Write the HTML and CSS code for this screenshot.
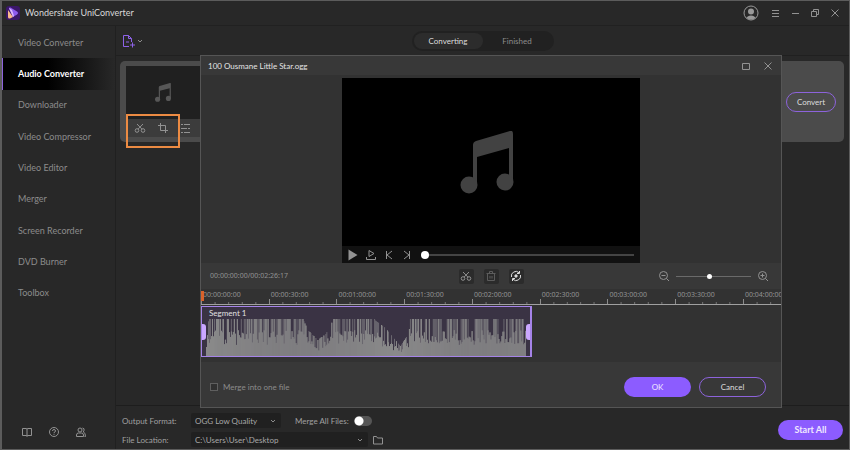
FILE: index.html
```html
<!DOCTYPE html>
<html lang="en">
<head>
  <meta charset="UTF-8">
  <meta name="viewport" content="width=device-width, initial-scale=1.0">
  <title>Wondershare UniConverter</title>
  <link rel="stylesheet" href="styles.css">
</head>
<body>
  <!-- shared icons -->
  <svg class="sprite" aria-hidden="true">
    <symbol id="note" viewBox="0 0 54 63">
      <path d="M13 14q0-3 3-4L50 0q3-1 3 3v47h-4V17L17 26v29h-4z"/>
      <circle cx="9" cy="54" r="8.500"/>
      <circle cx="45" cy="51" r="8.500"/>
    </symbol>
    <symbol id="scissors" viewBox="0 0 12 12">
      <circle cx="3" cy="8.500" r="1.800"/>
      <circle cx="9" cy="8.500" r="1.800"/>
      <path d="M3 2l5 5.200M9 2L4 7.200"/>
    </symbol>
    <symbol id="close" viewBox="0 0 12 12">
      <path d="M2.500 2.500l7 7M9.500 2.500l-7 7"/>
    </symbol>
  </svg>

  <div class="window">
    <header class="titlebar">
      <svg class="logo" viewBox="0 0 14 14">
        <rect width="14" height="14" rx="3" fill="#3b1769"/>
        <path d="M3 2.500q0-1.500 1.500-1l6.500 4q2 1.500 0 3l-4 2.500z" fill="#8f5cf0"/>
        <path d="M2 4l5 7-3 1.500q-2 .5-2-1.500z" fill="#f8b98b"/>
        <path d="M3 2l4 9 1-1-2-6z" fill="#dcb8ff"/>
      </svg>
      <h1>Wondershare UniConverter</h1>
      <div class="window-buttons">
        <button class="account" aria-label="Account">
          <svg class="avatar" viewBox="0 0 16 16">
            <circle cx="8" cy="8" r="7"/>
            <circle class="fill" cx="8" cy="6.500" r="3"/>
            <path class="fill" d="M3.500 13q1-2.500 4.500-2.500t4.500 2.500q-4.500 3-9 0z"/>
          </svg>
        </button>
        <button aria-label="Menu"><svg class="icon" viewBox="0 0 12 12"><path d="M3 3.500h7M3 6.500h7M3 9.500h7"/></svg></button>
        <button aria-label="Minimize"><svg class="icon" viewBox="0 0 12 12"><path d="M3 6.500h7"/></svg></button>
        <button aria-label="Restore"><svg class="icon" viewBox="0 0 12 12"><path d="M2.500 4.500h5v5h-5zM4.500 4.500v-2h5v5h-2"/></svg></button>
        <button aria-label="Close"><svg class="icon"><use href="#close"/></svg></button>
      </div>
    </header>

    <aside class="sidebar">
      <nav>
        <a href="#">Video Converter</a>
        <a href="#" class="active">Audio Converter</a>
        <a href="#">Downloader</a>
        <a href="#">Video Compressor</a>
        <a href="#">Video Editor</a>
        <a href="#">Merger</a>
        <a href="#">Screen Recorder</a>
        <a href="#">DVD Burner</a>
        <a href="#">Toolbox</a>
      </nav>
      <div class="help">
        <button aria-label="Guide"><svg class="icon" viewBox="0 0 12 12"><path d="M6 3v7.500M6 3L5 2.500H1.500v7H5l1 .5 1-.5h3.500v-7H7z"/></svg></button>
        <button aria-label="Help"><svg class="icon" viewBox="0 0 12 12"><circle cx="6" cy="6" r="4.500"/><path d="M4.500 5q0-1.500 1.500-1.500T7.500 5Q7.500 6 6 6.500v.8M6 8.200v.8"/></svg></button>
        <button aria-label="Community"><svg class="icon" viewBox="0 0 12 12"><circle cx="5" cy="4" r="2"/><path d="M1.500 10.500V9q0-2 2-2h3q2 0 2 2v1.500zM7.500 2q2 .3 1.600 2.200L8.300 6Q10.500 6.500 10.500 10.500H9.500"/></svg></button>
      </div>
    </aside>

    <main class="content">
      <div class="toolbar">
        <button class="add" aria-label="Add file">
          <svg class="add-icon" viewBox="0 0 14 14"><path d="M7 12.500H1.500v-11h5l3 3V8M6.500 1.500v3h3M4 8h3M10.500 8.500v5M8 11h5"/></svg>
          <svg class="chevron" viewBox="0 0 6 6"><path d="M1 2l2 2 2-2"/></svg>
        </button>
        <div class="tabs">
          <button class="tab selected">Converting</button>
          <button class="tab">Finished</button>
        </div>
      </div>

      <section class="files">
        <div class="file">
          <div class="preview">
            <div class="thumb"><svg><use href="#note"/></svg></div>
            <div class="actions">
              <button aria-label="Trim"><svg class="icon"><use href="#scissors"/></svg></button>
              <button aria-label="Crop"><svg class="icon" viewBox="0 0 12 12"><path d="M3.500 1v7.500H11M1 3.500h7.500V11"/></svg></button>
              <button aria-label="Effects"><svg class="icon" viewBox="0 0 12 12"><path d="M1 2.500h2M4 2.500h6M1 6.500h6M8 6.500h2M1 10.500h2M4 10.500h6"/></svg></button>
              <span class="highlight"></span>
            </div>
          </div>
          <button class="outline convert">Convert</button>
        </div>
      </section>

      <footer class="output">
        <div class="settings">
          <label for="format">Output Format:</label>
          <div class="setting">
            <span class="select format"><select id="format"><option>OGG Low Quality</option></select><svg class="chevron" viewBox="0 0 6 6"><path d="M1 2l2 2 2-2"/></svg></span>
            <label for="merge-all">Merge All Files:</label>
            <input type="checkbox" class="switch" id="merge-all">
          </div>
          <label for="location">File Location:</label>
          <div class="setting">
            <span class="select location"><select id="location"><option>C:\Users\User\Desktop</option></select><svg class="chevron" viewBox="0 0 6 6"><path d="M1 2l2 2 2-2"/></svg></span>
            <button class="folder" aria-label="Open folder"><svg class="icon" viewBox="0 0 12 12"><path d="M1.500 10V2.500h3l1 1.500h5v6z"/></svg></button>
          </div>
        </div>
        <button class="primary start">Start All</button>
      </footer>
    </main>

    <section class="dialog" role="dialog" aria-labelledby="dialog-title">
      <div class="dialog-title">
        <h2 id="dialog-title">100 Ousmane Little Star.ogg</h2>
        <button aria-label="Maximize"><svg class="icon" viewBox="0 0 12 12"><path d="M2.500 3.500h7v6h-7z"/></svg></button>
        <button aria-label="Close dialog"><svg class="icon"><use href="#close"/></svg></button>
      </div>

      <div class="stage">
        <div class="player">
          <div class="screen"><svg><use href="#note"/></svg></div>
          <div class="controls">
            <button aria-label="Play"><svg class="icon play" viewBox="0 0 12 12"><path d="M1.500 .5l9 5.500-9 5.500z"/></svg></button>
            <button aria-label="Play segment"><svg class="icon" viewBox="0 0 12 12"><path d="M4 1.500l5 3-5 3zM1.500 8v2.500h9V8"/></svg></button>
            <button aria-label="Previous frame"><svg class="icon" viewBox="0 0 12 12"><path d="M3.500 2v8M9 2L4 6l5 4"/></svg></button>
            <button aria-label="Next frame"><svg class="icon" viewBox="0 0 12 12"><path d="M8.500 2v8M3 2l5 4-5 4"/></svg></button>
            <input type="range" class="seek" value="0" aria-label="Position">
          </div>
        </div>
      </div>

      <div class="tools">
        <span class="time">00:00:00:00/00:02:26:17</span>
        <div class="edit">
          <button aria-label="Cut"><svg class="icon"><use href="#scissors"/></svg></button>
          <button class="disabled" aria-label="Delete" disabled><svg class="icon" viewBox="0 0 12 12"><path d="M1.500 3.500h9M4.500 3V1.500h3V3M2.500 3.500v7h7v-7M5 6v2.500M7 6v2.500"/></svg></button>
          <button class="bright" aria-label="Reset"><svg class="icon" viewBox="0 0 12 12"><path d="M1.500 7A4.500 4.500 0 0 1 9 2.700M10.500 5A4.500 4.500 0 0 1 3 9.300M9.500 1v2.500H7M2.500 11V8.500H5"/><circle class="dot" cx="6" cy="6" r="1.200"/></svg></button>
        </div>
        <div class="scale">
          <button aria-label="Zoom out"><svg class="icon" viewBox="0 0 12 12"><circle cx="5.500" cy="5.500" r="4"/><path d="M8.500 8.500l2.500 2.500M3.500 5.500h4"/></svg></button>
          <input type="range" class="zoom" value="44" aria-label="Zoom">
          <button aria-label="Zoom in"><svg class="icon" viewBox="0 0 12 12"><circle cx="5.500" cy="5.500" r="4"/><path d="M8.500 8.500l2.500 2.500M3.500 5.500h4M5.500 3.500v4"/></svg></button>
        </div>
      </div>

      <ol class="ruler">
        <li>00:00:00:00</li>
        <li>00:00:30:00</li>
        <li>00:01:00:00</li>
        <li>00:01:30:00</li>
        <li>00:02:00:00</li>
        <li>00:02:30:00</li>
        <li>00:03:00:00</li>
        <li>00:03:30:00</li>
        <li>00:04:00:00</li>
      </ol>

      <div class="track">
        <span class="playhead"></span>
        <div class="segment">
          <span class="name">Segment 1</span>
          <svg class="wave" viewBox="0 0 322 37" preserveAspectRatio="none">
            <path class="peak"/>
            <path class="body"/>
          </svg>
          <span class="handle start-handle"></span>
          <span class="handle end-handle"></span>
        </div>
      </div>

      <div class="dialog-footer">
        <label class="merge"><input type="checkbox">Merge into one file</label>
        <button class="primary">OK</button>
        <button class="outline">Cancel</button>
      </div>
    </section>
  </div>

  <script src="wave.js"></script>
</body>
</html>
```
FILE: styles.css
```css
* {
  box-sizing: border-box;
}
body {
  margin: 0;
  background-color: #282828;
  color: #8c8c8c;
  font-family: Lato, "Noto Sans", sans-serif;
  font-size: 8px;
  line-height: 12px;
}
h1, h2, ol {
  margin: 0;
  padding: 0;
  font-size: 8px;
  font-weight: normal;
}
button, select, input {
  margin: 0;
  padding: 0;
  border: 0;
  background: none;
  color: inherit;
  font: inherit;
}
button {
  display: flex;
  align-items: center;
  justify-content: center;
}
svg {
  display: block;
}
.sprite {
  display: none;
}
.icon {
  width: 12px;
  height: 12px;
  fill: none;
  stroke: #929292;
  stroke-width: 1;
}
.chevron {
  width: 6px;
  height: 6px;
  fill: none;
  stroke: #8c8c8c;
}

/* window */
.window {
  position: relative;
  display: grid;
  grid-template-columns: 114px 1fr;
  grid-template-rows: 25px 1fr;
  min-height: 100vh;
  border: 1px solid #5c5c5c;
  border-width: 1px 1px 1px 2px;
}
.titlebar {
  grid-column: 1 / 3;
  display: flex;
  align-items: center;
  gap: 5px;
  padding: 0 8px 0 4px;
  border-bottom: 1px solid #212121;
}
.titlebar h1 {
  color: #d8d8d8;
  font-size: 9px;
}
.logo {
  width: 14px;
  height: 14px;
}
.window-buttons {
  display: flex;
  align-items: center;
  gap: 8px;
  margin-left: auto;
}
.account {
  margin-right: 2px;
}
.avatar {
  width: 16px;
  height: 16px;
  fill: none;
  stroke: #999;
}
.avatar .fill {
  fill: #999;
  stroke: none;
}

/* sidebar */
.sidebar {
  display: flex;
  flex-direction: column;
  justify-content: space-between;
  padding-top: 1px;
  border-right: 1px solid #202020;
}
.sidebar nav {
  display: grid;
  grid-auto-rows: 1fr;
  height: 282px;
}
.sidebar nav a {
  display: flex;
  align-items: center;
  padding-left: 16px;
  color: #8c8c8c;
  font-size: 9px;
  text-decoration: none;
}
.sidebar nav .active {
  padding-left: 15px;
  border-left: 1px solid #8d63dc;
  background: linear-gradient(90deg, #000 40%, #282828);
  color: #fff;
  font-weight: bold;
}
.help {
  display: flex;
  gap: 15px;
  padding: 0 0 11px 19px;
}

/* content */
.content {
  display: flex;
  flex-direction: column;
  min-width: 0;
}
.toolbar {
  position: relative;
  display: flex;
  align-items: center;
  justify-content: center;
  height: 30px;
  border-bottom: 1px solid #202020;
}
.add {
  position: absolute;
  left: 6px;
  gap: 1px;
}
.add-icon {
  width: 14px;
  height: 14px;
  fill: none;
  stroke: #8e62e8;
}
.tabs {
  display: flex;
  padding: 2px;
  border-radius: 10px;
  background-color: #212121;
}
.tab {
  width: 69px;
  height: 16px;
  border-radius: 8px;
}
.tab.selected {
  background-color: #2c2c2c;
  color: #ddd;
}
.files {
  flex: 1;
  padding: 5px 5px 0 4px;
}
.file {
  display: flex;
  align-items: center;
  justify-content: space-between;
  padding: 5px 8px 5px 6px;
  border-radius: 5px;
  background-color: #4b4b4b;
}
.preview {
  width: 98px;
}
.thumb {
  display: flex;
  align-items: center;
  justify-content: center;
  height: 53px;
  padding-right: 24px;
  background-color: #202020;
}
.thumb svg {
  width: 20px;
  height: 19px;
  fill: #575757;
}
.actions {
  position: relative;
  display: flex;
  align-items: center;
  gap: 11px;
  height: 18px;
  padding-left: 8px;
  background-color: #3c3c3c;
}
.highlight {
  position: absolute;
  top: -5px;
  left: 0;
  width: 54px;
  height: 34px;
  border: 2px solid #ec8b43;
}
.outline, .primary {
  height: 20px;
  border-radius: 10px;
}
.outline {
  border: 1px solid #8d63dc;
  color: #ddd;
}
.primary {
  background-color: #8c5cff;
  color: #f0e8ff;
}
.convert {
  width: 50px;
}

.output {
  display: flex;
  align-items: center;
  justify-content: space-between;
  padding: 5px 6px 0 6px;
  border-top: 1px solid #1d1d1d;
}
.settings {
  display: grid;
  grid-template-columns: 69px auto;
  align-items: center;
}
.settings label {
  color: #a0a0a0;
}
.setting {
  display: flex;
  align-items: center;
  height: 19px;
}
.select {
  display: flex;
  align-items: center;
  padding-right: 5px;
  border-radius: 2px;
  background-color: #202020;
}
.select select {
  flex: 1;
  height: 15px;
  padding-left: 4px;
  appearance: none;
  color: #a8a8a8;
}
.format {
  width: 90px;
  margin-right: 14px;
}
.location {
  width: 177px;
}
.switch {
  width: 18px;
  height: 10px;
  margin-left: 5px;
  border-radius: 5px;
  background: radial-gradient(circle at 5px 5px, #fff 4px, #555 5px);
  appearance: none;
}
.folder {
  margin-left: 4px;
}
.start {
  width: 65px;
  font-size: 9px;
  font-weight: bold;
}

/* trim dialog */
.dialog {
  position: absolute;
  top: 54px;
  left: 198px;
  right: 67px;
  border: 1px solid #555;
  background-color: #383838;
}
.dialog-title {
  display: flex;
  align-items: center;
  gap: 10px;
  height: 19px;
  padding: 0 7px;
}
.dialog-title h2 {
  flex: 1;
  color: #e4e4e4;
}
.stage {
  padding: 3px 0 0;
  background-color: #323232;
}
.player {
  width: 51%;
  min-width: 298px;
  margin: 0 auto;
  background-color: #111;
}
.screen {
  display: flex;
  align-items: center;
  justify-content: center;
  height: 168px;
  padding-right: 8px;
  background-color: #000;
}
.screen svg {
  width: 54px;
  height: 63px;
  fill: #424242;
}
.controls {
  display: flex;
  align-items: center;
  gap: 6px;
  height: 17px;
  padding: 0 6px 0 5px;
}
.play {
  fill: #929292;
  stroke: none;
}
.seek {
  flex: 1;
  height: 8px;
  margin-left: 2px;
  appearance: none;
}
.seek::-webkit-slider-runnable-track {
  height: 2px;
  background-color: #444;
}
.seek::-webkit-slider-thumb {
  width: 8px;
  height: 8px;
  margin-top: -3px;
  border-radius: 50%;
  background-color: #fff;
  appearance: none;
}
.tools {
  display: grid;
  grid-template-columns: 1fr auto 1fr;
  align-items: center;
  height: 26px;
  padding: 0 9px;
}
.time {
  color: #929292;
  font-family: "Noto Sans", sans-serif;
  font-size: 7px;
}
.edit {
  display: flex;
  gap: 10px;
}
.edit button {
  width: 15px;
  height: 15px;
  border-radius: 2px;
  background-color: #2b2b2b;
}
.edit .disabled .icon {
  stroke: #5c5c5c;
}
.edit .bright .icon {
  stroke: #ddd;
}
.dot {
  fill: #ddd;
}
.scale {
  display: flex;
  align-items: center;
  justify-content: flex-end;
  gap: 6px;
  padding-right: 3px;
}
.zoom {
  width: 75px;
  height: 6px;
  appearance: none;
}
.zoom::-webkit-slider-runnable-track {
  height: 1px;
  background-color: #6a6a6a;
}
.zoom::-webkit-slider-thumb {
  width: 5px;
  height: 5px;
  margin-top: -2px;
  border-radius: 50%;
  background-color: #fff;
  appearance: none;
}

.ruler {
  display: flex;
  height: 16px;
  overflow: hidden;
  border-bottom: 1px solid #a0a0a0;
  background-color: #323232;
  list-style: none;
}
.ruler li {
  flex: 0 0 auto;
  width: 11.68%;
  padding-left: 2px;
  background:
    linear-gradient(#8c8c8c, #8c8c8c) 0 100% / 1px 5px no-repeat,
    linear-gradient(90deg, #777 1px, transparent 1px) 0 100% / 20% 2px repeat-x;
  color: #929292;
  font-family: "Noto Sans", sans-serif;
  font-size: 7px;
}
.track {
  position: relative;
  height: 57px;
  padding-top: 1px;
  background-color: #323232;
}
.playhead {
  position: absolute;
  top: -14px;
  left: 0;
  width: 3px;
  height: 10px;
  background-color: #d9622b;
}
.segment {
  position: relative;
  width: 57%;
  height: 51px;
  border: 1px solid #a583e8;
  border-width: 1px 2px 1px 1px;
  background-color: #3a3344;
}
.segment .name {
  display: block;
  padding-left: 7px;
  color: #e0e0e0;
}
.wave {
  width: 99%;
  height: 37px;
  padding-left: 4px;
}
.wave .peak {
  stroke: #6b6870;
}
.wave .body {
  stroke: #8b8b8b;
}
.handle {
  position: absolute;
  top: 17px;
  width: 4px;
  height: 16px;
  background-color: #cba8ff;
}
.start-handle {
  left: 0;
  border-radius: 0 3px 3px 0;
}
.end-handle {
  right: 0;
  border-radius: 3px 0 0 3px;
}
.dialog-footer {
  display: flex;
  align-items: center;
  gap: 8px;
  padding: 15px 15px 10px 9px;
}
.dialog-footer button {
  width: 67px;
}
.merge {
  display: flex;
  align-items: center;
  gap: 5px;
  margin-right: auto;
}
.merge input {
  width: 8px;
  height: 8px;
  border: 1px solid #5f5f5f;
  background-color: #303030;
  appearance: none;
}
```
FILE: wave.js
```js
// upper limit of the level along the segment: [x, height]
const envelope = [
  [0, 30], [3, 37], [97, 37], [102, 26], [112, 16], [120, 22], [128, 37],
  [168, 37], [180, 28], [195, 10], [203, 22], [206, 37], [322, 37]
];

function limit(x) {
  const i = envelope.findIndex(p => p[0] >= x) || 1;
  const [x0, y0] = envelope[i - 1];
  const [x1, y1] = envelope[i];
  return y0 + (y1 - y0) * (x - x0) / (x1 - x0);
}

let seed = 11;
function random() {
  seed = (seed * 16807) % 2147483647;
  return seed / 2147483647;
}

let peak = '';
let body = '';
for (let x = 0; x < 322; x++) {
  const max = limit(x);
  const low = max * (0.3 + random() * 0.4);
  const level = random() > 0.72 ? max : low;
  // a few full peaks stay in the quiet parts too
  const full = random() > 0.85 ? 37 : max;
  const top = random() > 0.6 ? full : level;
  body += `M${x + 0.5} 37v${-level.toFixed(1)}`;
  peak += `M${x + 0.5} 37v${-top.toFixed(1)}`;
}

document.querySelector('.peak').setAttribute('d', peak);
document.querySelector('.body').setAttribute('d', body);
```
